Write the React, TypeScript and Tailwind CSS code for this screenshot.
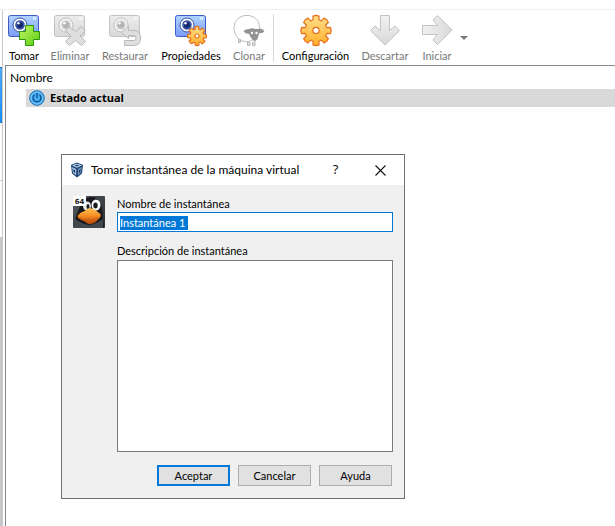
import type { ReactNode } from "react";

const TEETH = 8;

function gearPath(r: number) {
  const inner = r * 0.73;
  const points: string[] = [];
  for (let i = 0; i < TEETH; i++) {
    const middle = (i * 360) / TEETH;
    const corners: [number, number][] = [
      [-15, inner],
      [-12, r * 0.97],
      [0, r],
      [12, r * 0.97],
      [15, inner],
    ];
    for (const [offset, radius] of corners) {
      const a = ((middle + offset) * Math.PI) / 180;
      points.push(`${(radius * Math.sin(a)).toFixed(2)} ${(-radius * Math.cos(a)).toFixed(2)}`);
    }
  }
  return `M${points.join("L")}Z`;
}

function Camera({ muted = false }: { muted?: boolean }) {
  const id = muted ? "camMuted" : "camBlue";
  return (
    <>
      <defs>
        <linearGradient id={id} x1="0" y1="0" x2="0" y2="1">
          <stop offset="0" stopColor={muted ? "#ececec" : "#b0d4ff"} />
          <stop offset="1" stopColor={muted ? "#d9d9d9" : "#7a9cf8"} />
        </linearGradient>
      </defs>
      <rect x="0.5" y="1.5" width="30" height="21" rx="2" fill={`url(#${id})`} stroke={muted ? "#c2c2c2" : "#3f5cc4"} />
      <circle cx="12" cy="11" r="7" fill={muted ? "#f8f8f8" : "#fff"} stroke={muted ? "#bdbdbd" : "#3a52a8"} />
      <circle cx="12" cy="11" r="4.8" fill={muted ? "#cecece" : "#3c57ac"} />
      <circle cx="12" cy="11" r="3" fill={muted ? "#b2b2b2" : "#14266e"} />
      <circle cx="10.5" cy="9.3" r="1.2" fill="#fff" />
      <path d="M25 4.500h3" stroke={muted ? "#fafafa" : "#e5f4ff"} strokeWidth="2" />
    </>
  );
}

function Gear({ cx, cy, r, id }: { cx: number; cy: number; r: number; id: string }) {
  return (
    <g transform={`translate(${cx} ${cy})`}>
      <defs>
        <linearGradient id={id} x1="0" y1="0" x2="0" y2="1">
          <stop offset="0" stopColor="#ffe08a" />
          <stop offset="1" stopColor="#ffae2b" />
        </linearGradient>
      </defs>
      <path d={gearPath(r)} fill={`url(#${id})`} stroke="#e5701c" strokeWidth="1.2" strokeLinejoin="round" />
      <circle r={r * 0.21} fill="#fff" stroke="#e5701c" strokeWidth="1.2" />
    </g>
  );
}

function Icon({ children }: { children: ReactNode }) {
  return (
    <svg aria-hidden="true" className="h-8 w-8 shrink-0 overflow-visible" viewBox="0 0 32 32" fill="none">
      {children}
    </svg>
  );
}

const TakeIcon = () => (
  <Icon>
    <Camera />
    <defs>
      <linearGradient id="plus" x1="0" y1="0" x2="1" y2="1">
        <stop offset="0" stopColor="#c4f767" />
        <stop offset="1" stopColor="#5acb0c" />
      </linearGradient>
    </defs>
    <path d="M17.500 11.500h8v6h6v8h-6v6h-8v-6h-6v-8h6z" fill="url(#plus)" stroke="#2f9412" />
  </Icon>
);

const DeleteIcon = () => (
  <Icon>
    <Camera muted />
    <path d="M15.500 12.500l6 5 6-5 4 4-5.500 5.500 5.500 5.500-4 4-6-5-6 5-4-4 5.500-5.500-5.500-5.500z" fill="#dfdfdf" stroke="#b8b8b8" />
  </Icon>
);

const RestoreIcon = () => (
  <Icon>
    <Camera muted />
    <path
      d="M12.500 18.500l7-6v4H25q6.500 0 6.500 7.500t-6.500 7.500H15.500v-5H25q2 0 2-2.500t-2-2.500h-5.500v3z"
      fill="#dfdfdf"
      stroke="#b8b8b8"
      strokeLinejoin="round"
    />
  </Icon>
);

const PropertiesIcon = () => (
  <Icon>
    <Camera />
    <Gear cx={22} cy={22} r={9.6} id="gearSmall" />
  </Icon>
);

const CloneIcon = () => (
  <Icon>
    <path d="M5.500 24v4.500H7.500V26M14.500 27v4.500h2.500V28M19.500 28v3.500h2.500V26" fill="#ddd" stroke="#b8b8b8" />
    <path
      d="M14 1.500q3-.5 5 1 3 .5 4.500 3 2.500 2 2.500 5 1.500 3 0 6 0 4-2.500 6-1.500 3-4.500 3.500-2.500 2-5.500 1.500-3 .5-5.500-1.500-3-.5-4-3.500-2.500-2-2.500-5-1.500-3 0-6 0-3.500 2.500-5.500Q5.500 3 9 2.500q2-1.500 5-1z"
      fill="#fff"
      stroke="#bdbdbd"
    />
    <path d="M10.500 17q2-2 5.500-2 3-1.500 6.500 0l5.500-.3q2.500.5 3.500 2.500-2 2.500-5.500 2-.5 4-2 6.500-2 2-4 .5-3-3-4-6.500-4 .5-5.500-2.700z" fill="#939393" />
    <circle cx="19" cy="19" r="1.200" fill="#fff" />
    <circle cx="23.500" cy="19" r="1.200" fill="#fff" />
  </Icon>
);

const SettingsIcon = () => (
  <Icon>
    <Gear cx={16} cy={16.5} r={15.2} id="gearLarge" />
  </Icon>
);

const ArrowShape = () => (
  <>
    <defs>
      <linearGradient id="arrow" x1="0" y1="0" x2="0" y2="1">
        <stop offset="0" stopColor="#f1f1f1" />
        <stop offset="1" stopColor="#d9d9d9" />
      </linearGradient>
    </defs>
    <path d="M11.500 1.500h9v15l5.500-4.500 4.500 4.500L16 31 1.500 16.500 6 12l5.500 4.500z" fill="url(#arrow)" stroke="#c2c2c2" />
  </>
);

const DiscardIcon = () => (
  <Icon>
    <ArrowShape />
  </Icon>
);

const StartIcon = () => (
  <Icon>
    <g transform="rotate(-90 16 16)">
      <ArrowShape />
    </g>
  </Icon>
);

function Tool({ label, icon, width, disabled = false }: { label: string; icon: ReactNode; width: string; disabled?: boolean }) {
  return (
    <button type="button" disabled={disabled} className={`flex shrink-0 flex-col items-center gap-0.5 disabled:text-[#787878] ${width}`}>
      {icon}
      <span className="leading-4 whitespace-nowrap">{label}</span>
    </button>
  );
}

function VirtualBoxIcon() {
  return (
    <svg aria-hidden="true" className="h-4 w-4" viewBox="0 0 16 16">
      <path d="M2 3l6-2.500L14 3l-1 8.500-5 4L3 11.500z" fill="#153d70" />
      <path d="M3 3.500l5-2 5 2-5 2.200z" fill="#c3dcef" />
      <path d="M5.500 3.500L8 2.500l2.500 1L8 4.600z" fill="#1c4477" />
      <path d="M3 5l4.200 2v6.500L4 11z" fill="#a4c4e0" />
      <path d="M13 5L8.800 7v6.500L12 11z" fill="#6f95ba" />
      <path d="M4.300 7.200L6 8.200V11l-1.300-1zM11.700 7.200L10 8.200V11l1.300-1z" fill="#0e2c59" />
    </svg>
  );
}

function LinuxIcon() {
  return (
    <svg aria-hidden="true" className="h-8 w-8 shrink-0" viewBox="0 0 32 32">
      <defs>
        <linearGradient id="night" x1="0" y1="0" x2="1" y2="1">
          <stop offset="0" stopColor="#555b61" />
          <stop offset="1" stopColor="#2a2d32" />
        </linearGradient>
        <linearGradient id="beak" x1="0" y1="0" x2="0" y2="1">
          <stop offset="0" stopColor="#ffc251" />
          <stop offset="0.500" stopColor="#f68a20" />
          <stop offset="1" stopColor="#a94209" />
        </linearGradient>
      </defs>
      <rect width="32" height="32" rx="1" fill="url(#night)" />
      <path d="M3 32Q1 22 6 13 10 1 18 1q10 0 11 12l2 19z" fill="#17191c" />
      <path d="M2 32V23q7 5 14 6 7-1 14-6v9z" fill="#43484e" />
      <ellipse cx="14" cy="10" rx="4" ry="4.500" fill="#e9e9e9" />
      <ellipse cx="23" cy="9" rx="4.500" ry="5.500" fill="#fff" />
      <ellipse cx="15" cy="10.500" rx="1.500" ry="2.500" fill="#17191c" />
      <ellipse cx="22.500" cy="9.500" rx="2.200" ry="3" fill="#17191c" />
      <path d="M4.500 20q3-4 8-5.500 3-3.500 8-1.500l7 5q1 3-3 6-3 4-8 4-3 0-5-3-7-2-7-5z" fill="url(#beak)" />
      <path d="M5 20.500q5 3 10 3 7-.5 11.500-3-1 4-4.500 5-4 3-7 2-3-2.500-7-3.500z" fill="#c95a10" opacity=".55" />
      <rect width="13" height="10" fill="#fff" />
      <text x="6.500" y="8" textAnchor="middle" fontFamily="DejaVu Sans, sans-serif" fontWeight="700" fontSize="7" fill="#17191c">
        64
      </text>
    </svg>
  );
}

function SnapshotDialog() {
  const action = "h-[21px] w-[73px] bg-[#e1e1e1] text-center leading-4";
  return (
    <form
      role="dialog"
      aria-labelledby="dialog-title"
      onSubmit={(e) => e.preventDefault()}
      className="absolute top-[154px] left-[61px] w-[344px] border border-[#707070] bg-[#f0f0f0]"
    >
      <header className="flex h-[30px] items-center bg-white pl-[7px]">
        <VirtualBoxIcon />
        <h1 id="dialog-title" className="ml-[6px] grow text-xs whitespace-nowrap">
          Tomar instantánea de la máquina virtual
        </h1>
        <button type="button" aria-label="Ayuda contextual" className="w-[45px] text-center font-['Open_Sans',sans-serif] text-[13px] font-medium">
          ?
        </button>
        <button type="button" aria-label="Cerrar" className="flex h-full w-[46px] items-center justify-center pr-0.5">
          <svg aria-hidden="true" className="h-[11px] w-[11px]" viewBox="0 0 11 11">
            <path d="M.5.5l10 10M10.500.5l-10 10" stroke="#111" strokeWidth="1.100" />
          </svg>
        </button>
      </header>
      <div className="flex gap-3 px-[11px] pt-[11px]">
        <LinuxIcon />
        <div className="flex min-w-0 grow flex-col">
          <label htmlFor="snapshot-name" className="leading-4">
            Nombre de instantánea
          </label>
          <div className="h-5 border border-[#0078d7] bg-white px-0.5">
            <input
              id="snapshot-name"
              type="text"
              defaultValue="Instantánea 1"
              className="mt-[3px] block h-[14px] w-[68px] bg-[#0078d7] leading-[14px] text-white outline-none"
            />
          </div>
          <label htmlFor="snapshot-description" className="mt-[11px] leading-4">
            Descripción de instantánea
          </label>
          <textarea id="snapshot-description" className="mt-px block h-48 w-full resize-none border border-[#7a7a7a] bg-white p-1 outline-none" />
        </div>
      </div>
      <footer className="flex justify-end gap-2 px-3 pt-[13px] pb-3">
        <button type="submit" className={`border-2 border-[#0078d7] ${action}`}>
          Aceptar
        </button>
        <button type="button" className={`border border-[#adadad] ${action}`}>
          Cancelar
        </button>
        <button type="button" className={`border border-[#adadad] ${action}`}>
          Ayuda
        </button>
      </footer>
    </form>
  );
}

export default function App() {
  return (
    <div className="relative flex min-h-screen flex-col overflow-hidden bg-white font-['Lato','Open_Sans',sans-serif] text-[11px] text-black">
      <div className="h-[10px] shrink-0 border-b border-[#f0f0f0]" />
      <div className="flex grow">
        <aside className="flex w-[3px] shrink-0 flex-col border-r border-[#c8c8c8]">
          <div className="h-[57px]" />
          <div className="h-14 border-y border-[#2276c8] bg-linear-to-b from-[#4aa9fa] to-[#168cf8]" />
          <div className="h-[58px] border-b border-[#c8c8c8]" />
          <div className="h-14" />
          <div className="grow bg-[#c8c8c8]" />
        </aside>
        <main className="flex min-w-0 grow flex-col pl-0.5">
          <div role="toolbar" aria-label="Instantáneas" className="flex h-[55px] items-start pt-1 pl-1">
            <div className="flex gap-[13px]">
              <Tool label="Tomar" icon={<TakeIcon />} width="w-[30px]" />
              <Tool label="Eliminar" icon={<DeleteIcon />} width="w-9" disabled />
              <Tool label="Restaurar" icon={<RestoreIcon />} width="w-12" disabled />
              <Tool label="Propiedades" icon={<PropertiesIcon />} width="w-[58px]" />
              <Tool label="Clonar" icon={<CloneIcon />} width="w-8" disabled />
            </div>
            <div className="mr-[9px] ml-2 h-12 w-px shrink-0 bg-[#d8d8d8]" />
            <div className="flex gap-[13px]">
              <Tool label="Configuración" icon={<SettingsIcon />} width="w-[65px]" />
              <Tool label="Descartar" icon={<DiscardIcon />} width="w-12" disabled />
              <Tool label="Iniciar" icon={<StartIcon />} width="w-[30px]" disabled />
            </div>
            <button type="button" aria-label="Opciones de inicio" className="mt-[22px] ml-2 border-x-4 border-t-4 border-x-transparent border-t-[#777]" />
          </div>
          <section className="grow border-t border-l border-[#828790]">
            <h2 className="h-[23px] pl-1 text-xs leading-6">Nombre</h2>
            <div className="ml-5 flex h-[18px] items-center gap-[5px] bg-[#d9d9d9] pl-[3px] font-['Open_Sans',sans-serif] font-bold">
              <svg aria-hidden="true" className="h-4 w-4" viewBox="0 0 16 16" fill="none">
                <circle cx="8" cy="8" r="7.300" fill="#45adf2" stroke="#1a69b1" />
                <circle cx="8" cy="8" r="6" stroke="#7bcdfb" />
                <path d="M5.500 4.800a4 4 0 1 0 5 0M8 3v5" stroke="#0d4b8f" strokeWidth="1.300" />
              </svg>
              <span>Estado actual</span>
            </div>
          </section>
        </main>
      </div>
      <SnapshotDialog />
    </div>
  );
}
